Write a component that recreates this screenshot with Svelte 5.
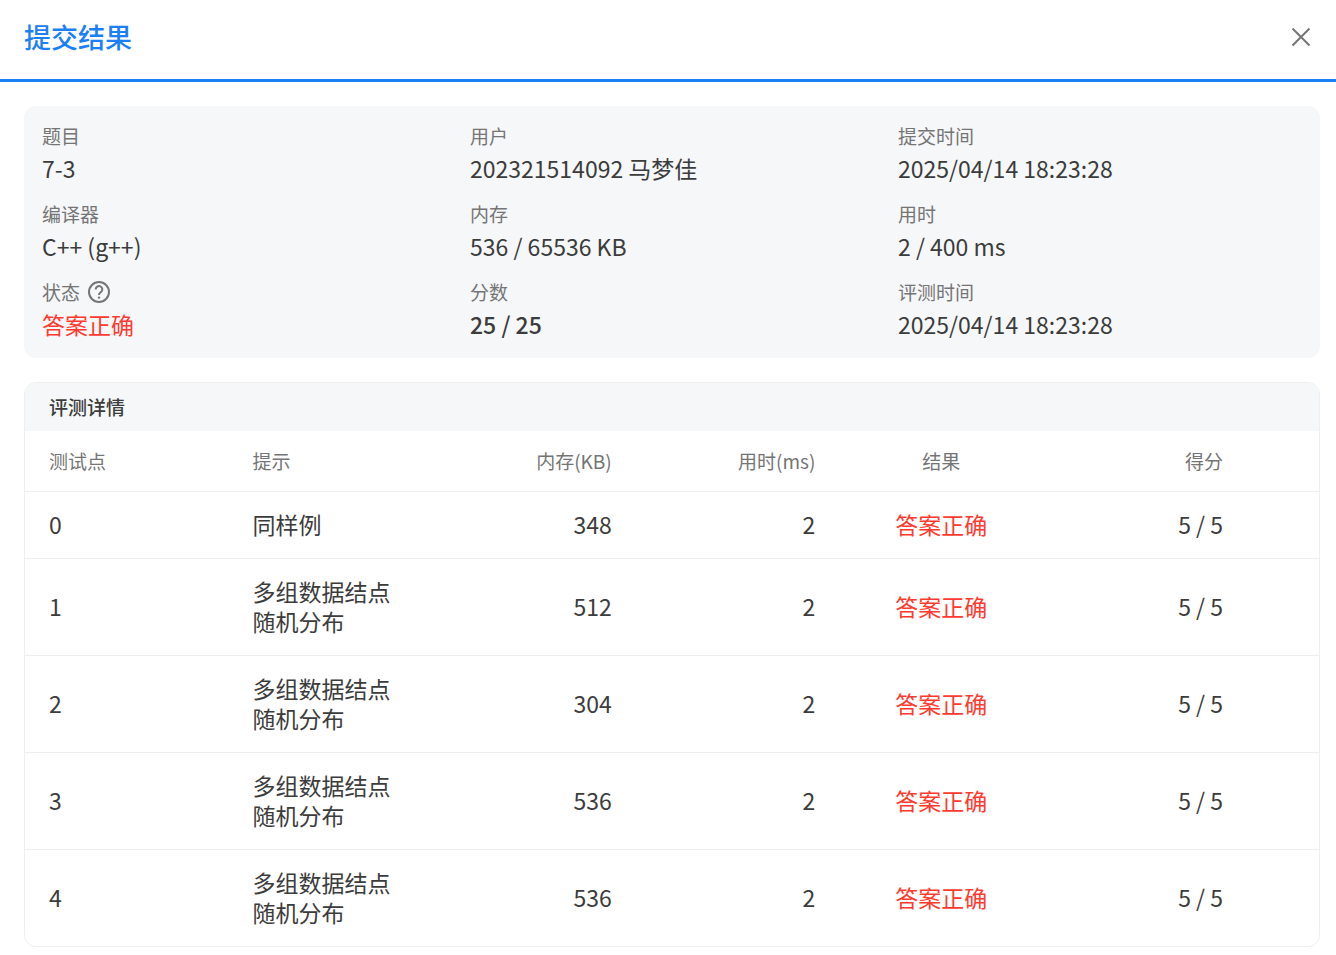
<script lang="ts">
  interface Field {
    label: string;
    value: string;
    kind?: 'accepted' | 'score';
    help?: boolean;
  }

  interface TestCase {
    id: number;
    hint: string;
    memory: number;
    time: number;
    result: string;
    score: string;
  }

  const fields: Field[] = [
    { label: '题目', value: '7-3' },
    { label: '用户', value: '202321514092 马梦佳' },
    { label: '提交时间', value: '2025/04/14 18:23:28' },
    { label: '编译器', value: 'C++ (g++)' },
    { label: '内存', value: '536 / 65536 KB' },
    { label: '用时', value: '2 / 400 ms' },
    { label: '状态', value: '答案正确', kind: 'accepted', help: true },
    { label: '分数', value: '25 / 25', kind: 'score' },
    { label: '评测时间', value: '2025/04/14 18:23:28' }
  ];

  const testCases: TestCase[] = [
    { id: 0, hint: '同样例', memory: 348, time: 2, result: '答案正确', score: '5 / 5' },
    { id: 1, hint: '多组数据结点随机分布', memory: 512, time: 2, result: '答案正确', score: '5 / 5' },
    { id: 2, hint: '多组数据结点随机分布', memory: 304, time: 2, result: '答案正确', score: '5 / 5' },
    { id: 3, hint: '多组数据结点随机分布', memory: 536, time: 2, result: '答案正确', score: '5 / 5' },
    { id: 4, hint: '多组数据结点随机分布', memory: 536, time: 2, result: '答案正确', score: '5 / 5' }
  ];

  let open = $state(true);
</script>

{#if open}
  <div class="dialog" role="dialog" aria-labelledby="dialog-title">
    <header class="dialog-header">
      <h1 class="dialog-title" id="dialog-title">提交结果</h1>
      <button class="close-button" type="button" aria-label="关闭" onclick={() => (open = false)}>
        <svg width="22" height="22" viewBox="0 0 22 22" fill="none" stroke="currentColor" stroke-width="2">
          <path d="M2.5 2.5l17 17M19.5 2.5l-17 17" />
        </svg>
      </button>
    </header>

    <main class="dialog-body">
      <dl class="summary">
        {#each fields as field}
          <div class="field">
            <dt class="field-label">
              {field.label}
              {#if field.help}
                <button class="help-button" type="button" aria-label="状态说明">
                  <svg width="22" height="22" viewBox="0 0 22 22" fill="none" stroke="currentColor" stroke-width="2">
                    <circle cx="11" cy="11" r="10" />
                    <path d="M7.7 8.4a3.3 3.3 0 1 1 5.3 2.6c-1.3 1-2 1.5-2 3" />
                    <circle cx="11" cy="16.6" r="1.2" fill="currentColor" stroke="none" />
                  </svg>
                </button>
              {/if}
            </dt>
            <dd class="field-value {field.kind ?? ''}">{field.value}</dd>
          </div>
        {/each}
      </dl>

      <section class="detail">
        <h2 class="detail-title">评测详情</h2>
        <table class="detail-table">
          <thead>
            <tr>
              <th>测试点</th>
              <th>提示</th>
              <th class="number">内存(KB)</th>
              <th class="number">用时(ms)</th>
              <th class="result">结果</th>
              <th class="score-cell">得分</th>
            </tr>
          </thead>
          <tbody>
            {#each testCases as testCase (testCase.id)}
              <tr>
                <td>{testCase.id}</td>
                <td>{testCase.hint}</td>
                <td class="number">{testCase.memory}</td>
                <td class="number">{testCase.time}</td>
                <td class="result accepted">{testCase.result}</td>
                <td class="score-cell">{testCase.score}</td>
              </tr>
            {/each}
          </tbody>
        </table>
      </section>
    </main>
  </div>
{/if}

<style>
  :global(body) {
    margin: 0;
    background: #fff;
  }

  .dialog {
    --color-primary: #1c80f5;
    --color-accepted: #ff3b30;
    --color-text: #3c3c3c;
    --color-text-dim: #757575;
    --color-surface: #f5f7f9;
    --color-border: #eeeff0;

    font-family: 'Noto Sans CJK SC', sans-serif;
    font-size: 23px;
    line-height: 30px;
    color: var(--color-text);
  }

  .dialog-header {
    display: flex;
    align-items: center;
    justify-content: space-between;
    padding: 17px 24px 22px;
    border-bottom: 3px solid var(--color-primary);
  }

  .dialog-title {
    margin: 0;
    font-size: 27px;
    line-height: 40px;
    font-weight: 500;
    color: var(--color-primary);
  }

  .close-button,
  .help-button {
    display: flex;
    padding: 0;
    border: none;
    background: none;
    color: var(--color-text-dim);
    cursor: pointer;
  }

  .dialog-body {
    padding: 24px 16px 8px 24px;
  }

  .summary {
    display: grid;
    grid-template-columns: repeat(3, 1fr);
    gap: 14px 24px;
    margin: 0 0 24px;
    padding: 15px 18px 17px;
    border-radius: 12px;
    background: var(--color-surface);
  }

  .field-label {
    display: flex;
    align-items: center;
    gap: 8px;
    font-size: 19px;
    color: var(--color-text-dim);
  }

  .field-value {
    margin: 0;
    line-height: 34px;
  }

  .score {
    font-weight: 500;
  }

  .accepted {
    color: var(--color-accepted);
  }

  .detail {
    overflow: hidden;
    border: 1px solid var(--color-border);
    border-radius: 12px;
  }

  .detail-title {
    margin: 0;
    padding: 9px 24px;
    font-size: 19px;
    font-weight: 500;
    background: var(--color-surface);
  }

  .detail-table {
    width: 100%;
    table-layout: fixed;
    border-collapse: separate;
    border-spacing: 0;
  }

  th,
  td {
    box-sizing: border-box;
    padding: 17px 24px 19px;
    border-bottom: 1px solid var(--color-border);
    text-align: left;
    vertical-align: middle;
  }

  th {
    padding: 15px 24px;
    font-size: 19px;
    font-weight: 400;
    color: var(--color-text-dim);
  }

  tbody tr:last-child td {
    border-bottom: none;
  }

  .number {
    text-align: right;
  }

  .result {
    text-align: center;
  }

  .score-cell {
    width: 276px;
    padding-right: 96px;
    text-align: right;
  }
</style>
